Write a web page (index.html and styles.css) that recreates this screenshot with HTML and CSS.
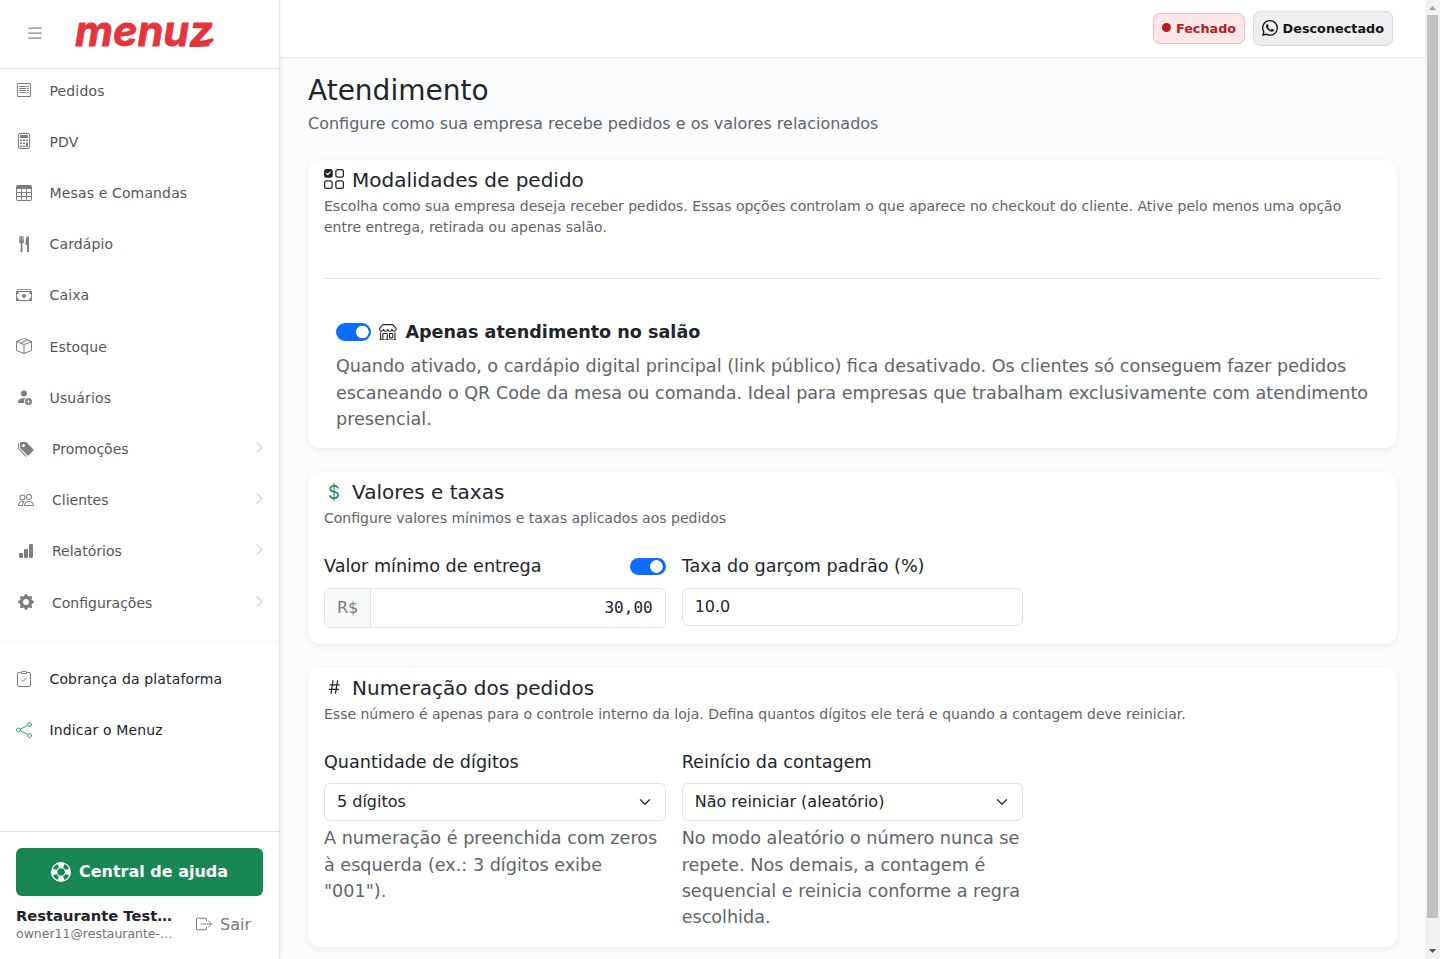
FILE: index.html
```html
<!DOCTYPE html>
<html lang="pt-BR">
<head>
    <meta charset="UTF-8">
    <meta name="viewport" content="width=device-width, initial-scale=1.0">
    <title>Menuz - Atendimento</title>
    <link rel="stylesheet" href="styles.css">
</head>
<body>

<!-- Menu lateral -->
<aside class="sidebar">
    <div class="sidebar-header">
        <button class="menu-toggle" aria-label="Menu">
            <svg class="icon icon-lg" viewBox="0 0 16 16"><path class="line" d="M3 4h10M3 8h10M3 12h10"/></svg>
        </button>
        <svg class="logo" viewBox="0 0 150 60" aria-label="menuz">
            <text x="5" y="42" textLength="138" lengthAdjust="spacingAndGlyphs">menuz</text>
            <path d="M120 41.5Q131 37 142.500 34.500Q145 37 139 39.500Q129 44 120 42.500z"/>
        </svg>
    </div>

    <nav class="sidebar-nav">
        <a class="nav-item" href="#">
            <svg class="icon" viewBox="0 0 16 16"><path class="line" d="M1.5 2l.5-1 1 1 1-1 1 1 1-1 1 1 1-1 1 1 1-1 1 1 1-1 1 1 1-1 .5 1v12l-.5 1-1-1-1 1-1-1-1 1-1-1-1 1-1-1-1 1-1-1-1 1-1-1-1 1-.5-1z"/><path class="line" d="M3.5 4.5h6m-6 2h6m-6 2h6m-6 2h6m2-6h1m-1 2h1m-1 2h1m-1 2h1"/></svg>
            <span>Pedidos</span>
        </a>
        <a class="nav-item" href="#">
            <svg class="icon" viewBox="0 0 16 16"><rect class="line" x="2.5" y=".5" width="11" height="15" rx="1.5"/><path d="M4 2h8v3H4zM4 6.5h2v1.5H4zM7 6.5h2v1.5H7zM10 6.5h2v1.5h-2zM4 9.5h2V11H4zM7 9.5h2V11H7zM4 12.5h2V14H4zM7 12.5h2V14H7zM10 9.5h2V14h-2z"/></svg>
            <span>PDV</span>
        </a>
        <a class="nav-item" href="#">
            <svg class="icon" viewBox="0 0 16 16"><path d="M0 2a2 2 0 0 1 2-2h12a2 2 0 0 1 2 2v12a2 2 0 0 1-2 2H2a2 2 0 0 1-2-2zm15 2h-4v3h4zm0 4h-4v3h4zm0 4h-4v3h3a1 1 0 0 0 1-1zm-5 3v-3H6v3zm-5 0v-3H1v2a1 1 0 0 0 1 1zm-4-4h4V8H1zm0-4h4V4H1zm5-3v3h4V4zm4 4H6v3h4z"/></svg>
            <span>Mesas e Comandas</span>
        </a>
        <a class="nav-item" href="#">
            <svg class="icon" viewBox="0 0 16 16"><path d="M13 .5c0-.276-.226-.506-.498-.465-1.703.257-2.94 2.012-3 8.462a.5.5 0 0 0 .498.5c.56.01 1 .13 1 1.003v5.5a.5.5 0 0 0 .5.5h1a.5.5 0 0 0 .5-.5zM4.25 0a.25.25 0 0 1 .25.25v5.122a.128.128 0 0 0 .256.006l.233-5.14A.25.25 0 0 1 5.24 0h.522a.25.25 0 0 1 .25.238l.233 5.14a.128.128 0 0 0 .256-.006V.25A.25.25 0 0 1 6.75 0h.29a.5.5 0 0 1 .498.458l.423 5.07a1.69 1.69 0 0 1-1.059 1.711l-.053.022a.92.92 0 0 0-.58.884L6.47 15a.971.971 0 1 1-1.942 0l.202-6.855a.92.92 0 0 0-.58-.884l-.053-.022a1.69 1.69 0 0 1-1.059-1.712L3.462.458A.5.5 0 0 1 3.96 0z"/></svg>
            <span>Cardápio</span>
        </a>
        <a class="nav-item" href="#">
            <svg class="icon" viewBox="0 0 16 16"><path d="M1 2.2h14v.9H1zM8 11a2 2 0 1 0 0-4 2 2 0 0 0 0 4"/><path d="M0 5a1 1 0 0 1 1-1h14a1 1 0 0 1 1 1v8a1 1 0 0 1-1 1H1a1 1 0 0 1-1-1zm3 0a2 2 0 0 1-2 2v4a2 2 0 0 1 2 2h10a2 2 0 0 1 2-2V7a2 2 0 0 1-2-2z"/></svg>
            <span>Caixa</span>
        </a>
        <a class="nav-item" href="#">
            <svg class="icon" viewBox="0 0 16 16"><path d="M8.186 1.113a.5.5 0 0 0-.372 0L1.846 3.5l2.404.961L10.404 2zm3.564 1.426L5.596 5 8 5.961 14.154 3.5zm3.25 1.7-6.5 2.6v7.922l6.5-2.6V4.24zM7.5 14.762V6.838L1 4.239v7.923zM7.443.184a1.5 1.5 0 0 1 1.114 0l7.129 2.852A.5.5 0 0 1 16 3.5v8.662a1 1 0 0 1-.629.928l-7.185 2.874a.5.5 0 0 1-.372 0L.63 13.09a1 1 0 0 1-.63-.928V3.5a.5.5 0 0 1 .314-.464z"/></svg>
            <span>Estoque</span>
        </a>
        <a class="nav-item" href="#">
            <svg class="icon" viewBox="0 0 16 16"><path d="M12.5 16a3.5 3.5 0 1 0 0-7 3.5 3.5 0 0 0 0 7m.5-5v1h1a.5.5 0 0 1 0 1h-1v1a.5.5 0 0 1-1 0v-1h-1a.5.5 0 0 1 0-1h1v-1a.5.5 0 0 1 1 0M11 4.5a3 3 0 1 1-6 0 3 3 0 0 1 6 0"/><path d="M2 13c0 1 1 1 1 1h5.256A4.5 4.5 0 0 1 8 12.5a4.5 4.5 0 0 1 1.544-3.393Q8.844 9.002 8 9c-5 0-6 3-6 4"/></svg>
            <span>Usuários</span>
        </a>
        <a class="nav-item nav-group" href="#">
            <svg class="icon" viewBox="0 0 16 16"><path d="M2 2a1 1 0 0 1 1-1h4.586a1 1 0 0 1 .707.293l7 7a1 1 0 0 1 0 1.414l-4.586 4.586a1 1 0 0 1-1.414 0l-7-7A1 1 0 0 1 2 6.586zm3.5 4a1.5 1.5 0 1 0 0-3 1.5 1.5 0 0 0 0 3"/><path d="M1.293 7.793A1 1 0 0 1 1 7.086V2a1 1 0 0 0-1 1v4.586a1 1 0 0 0 .293.707l7 7a1 1 0 0 0 1.414 0l.043-.043z"/></svg>
            <span>Promoções</span>
            <svg class="chevron" viewBox="0 0 16 16"><path class="line" d="M5 2l6 6-6 6"/></svg>
        </a>
        <a class="nav-item nav-group" href="#">
            <svg class="icon" viewBox="0 0 16 16"><path d="M15 14s1 0 1-1-1-4-5-4-5 3-5 4 1 1 1 1zm-7.978-1L7 12.996c.001-.264.167-1.03.76-1.72C8.312 10.629 9.282 10 11 10c1.717 0 2.687.63 3.24 1.276.593.69.758 1.457.76 1.72l-.008.002-.014.002zM11 7a2 2 0 1 0 0-4 2 2 0 0 0 0 4m3-2a3 3 0 1 1-6 0 3 3 0 0 1 6 0M6.936 9.28a6 6 0 0 0-1.23-.247A7 7 0 0 0 5 9c-4 0-5 3-5 4q0 1 1 1h4.216A2.24 2.24 0 0 1 5 13c0-1.01.377-2.042 1.09-2.904.243-.294.526-.569.846-.816M4.92 10A5.5 5.5 0 0 0 4 13H1c0-.26.164-1.03.76-1.724.545-.636 1.492-1.256 3.16-1.275ZM1.5 5.5a3 3 0 1 1 6 0 3 3 0 0 1-6 0m3-2a2 2 0 1 0 0 4 2 2 0 0 0 0-4"/></svg>
            <span>Clientes</span>
            <svg class="chevron" viewBox="0 0 16 16"><path class="line" d="M5 2l6 6-6 6"/></svg>
        </a>
        <a class="nav-item nav-group" href="#">
            <svg class="icon" viewBox="0 0 16 16"><rect x="1" y="10" width="4" height="5" rx="1"/><rect x="6" y="6" width="4" height="9" rx="1"/><rect x="11" y="1" width="4" height="14" rx="1"/></svg>
            <span>Relatórios</span>
            <svg class="chevron" viewBox="0 0 16 16"><path class="line" d="M5 2l6 6-6 6"/></svg>
        </a>
        <a class="nav-item nav-group" href="#">
            <svg class="icon" viewBox="0 0 16 16"><path d="M9.405 1.05c-.413-1.4-2.397-1.4-2.81 0l-.1.34a1.464 1.464 0 0 1-2.105.872l-.31-.17c-1.283-.698-2.686.705-1.987 1.987l.169.311c.446.82.023 1.841-.872 2.105l-.34.1c-1.4.413-1.4 2.397 0 2.81l.34.1a1.464 1.464 0 0 1 .872 2.105l-.17.31c-.698 1.283.705 2.686 1.987 1.987l.311-.169a1.464 1.464 0 0 1 2.105.872l.1.34c.413 1.4 2.397 1.4 2.81 0l.1-.34a1.464 1.464 0 0 1 2.105-.872l.31.17c1.283.698 2.686-.705 1.987-1.987l-.169-.311a1.464 1.464 0 0 1 .872-2.105l.34-.1c1.4-.413 1.4-2.397 0-2.81l-.34-.1a1.464 1.464 0 0 1-.872-2.105l.17-.31c.698-1.283-.705-2.686-1.987-1.987l-.311.169a1.464 1.464 0 0 1-2.105-.872zM8 10.93a2.929 2.929 0 1 1 0-5.86 2.929 2.929 0 0 1 0 5.858z"/></svg>
            <span>Configurações</span>
            <svg class="chevron" viewBox="0 0 16 16"><path class="line" d="M5 2l6 6-6 6"/></svg>
        </a>
        <div class="nav-divider"></div>
        <a class="nav-item nav-dark" href="#">
            <svg class="icon" viewBox="0 0 16 16"><path class="line" d="M5 1.5H3A1.5 1.5 0 0 0 1.5 3v11A1.5 1.5 0 0 0 3 15.5h10a1.5 1.5 0 0 0 1.5-1.5V3A1.5 1.5 0 0 0 13 1.5h-2M5.5 1q0-.5.5-.5h4q.5 0 .5.5v1.5h-5zM5.5 9L7 10.5l3.5-3.5"/></svg>
            <span>Cobrança da plataforma</span>
        </a>
        <a class="nav-item nav-dark nav-share" href="#">
            <svg class="icon" viewBox="0 0 16 16"><path class="line" d="M4.3 7.2l7.4-3.7M4.3 8.8l7.4 3.7"/><circle class="line" cx="2.5" cy="8" r="2"/><circle class="line" cx="13.5" cy="2.5" r="2"/><circle class="line" cx="13.5" cy="13.5" r="2"/></svg>
            <span>Indicar o Menuz</span>
        </a>
    </nav>

    <div class="sidebar-footer">
        <a class="help-button" href="#">
            <svg class="icon icon-lg" viewBox="0 0 16 16"><path d="M8 16A8 8 0 1 0 8 0a8 8 0 0 0 0 16m6.43-5.228a7.03 7.03 0 0 1-3.658 3.658l-1.115-2.788a4 4 0 0 0 1.985-1.985zM5.228 14.43a7.03 7.03 0 0 1-3.658-3.658l2.788-1.115a4 4 0 0 0 1.985 1.985zm9.202-9.202-2.788 1.115a4 4 0 0 0-1.985-1.985l1.115-2.788a7.03 7.03 0 0 1 3.658 3.658m-8.087-.87a4 4 0 0 0-1.985 1.985L1.57 5.228A7.03 7.03 0 0 1 5.228 1.57zM8 11a3 3 0 1 1 0-6 3 3 0 0 1 0 6"/></svg>
            Central de ajuda
        </a>
        <div class="account">
            <div class="account-info">
                <div class="account-name">Restaurante Test…</div>
                <div class="account-email">owner11@restaurante-…</div>
            </div>
            <a class="logout" href="#">
                <svg class="icon" viewBox="0 0 16 16"><path class="line" d="M10.5 5V3a.8.8 0 0 0-.8-.8H1.3A.8.8 0 0 0 .5 3v10a.8.8 0 0 0 .8.8h8.4a.8.8 0 0 0 .8-.8v-2M5.5 8h10M12.5 5l3 3-3 3"/></svg>
                Sair
            </a>
        </div>
    </div>
</aside>

<!-- Conteúdo -->
<div class="page">
    <header class="topbar">
        <span class="status status-closed"><i class="dot"></i>Fechado</span>
        <span class="status status-offline">
            <svg class="icon" viewBox="0 0 16 16"><path d="M13.601 2.326A7.85 7.85 0 0 0 7.994 0C3.627 0 .068 3.558.064 7.926c0 1.399.366 2.76 1.057 3.965L0 16l4.204-1.102a7.9 7.9 0 0 0 3.79.965h.004c4.368 0 7.926-3.558 7.93-7.93A7.9 7.9 0 0 0 13.6 2.326zM7.994 14.521a6.6 6.6 0 0 1-3.356-.92l-.24-.144-2.494.654.666-2.433-.156-.251a6.56 6.56 0 0 1-1.007-3.505c0-3.626 2.957-6.584 6.591-6.584a6.56 6.56 0 0 1 4.66 1.931 6.56 6.56 0 0 1 1.928 4.66c-.004 3.639-2.961 6.592-6.592 6.592m3.615-4.934c-.197-.099-1.17-.578-1.353-.646-.182-.065-.315-.099-.445.099-.133.197-.513.646-.627.775-.114.133-.232.148-.43.05-.197-.1-.836-.308-1.592-.985-.59-.525-.985-1.175-1.103-1.372-.114-.198-.011-.304.088-.403.087-.088.197-.232.296-.346.1-.114.133-.198.198-.33.065-.134.034-.248-.015-.347-.05-.099-.445-1.076-.612-1.47-.16-.389-.323-.335-.445-.34-.114-.007-.247-.007-.38-.007a.73.73 0 0 0-.529.247c-.182.198-.691.677-.691 1.654s.71 1.916.81 2.049c.098.133 1.394 2.132 3.383 2.992.47.205.84.326 1.129.418.475.152.904.129 1.246.08.38-.058 1.171-.48 1.338-.943.164-.464.164-.86.114-.943-.049-.084-.182-.133-.38-.232"/></svg>
            Desconectado
        </span>
    </header>

    <main class="content">
        <h1>Atendimento</h1>
        <p class="lead">Configure como sua empresa recebe pedidos e os valores relacionados</p>

        <section class="card">
            <h2>
                <svg class="icon icon-lg" viewBox="0 0 16 16"><rect class="line" x="9.5" y=".5" width="6" height="6" rx="1.5"/><rect class="line" x=".5" y="9.5" width="6" height="6" rx="1.5"/><rect class="line" x="9.5" y="9.5" width="6" height="6" rx="1.5"/><path d="M0 2a2 2 0 0 1 2-2h3a2 2 0 0 1 2 2v3a2 2 0 0 1-2 2H2a2 2 0 0 1-2-2zm5.354.854a.5.5 0 1 0-.708-.708L3 3.793l-.646-.647a.5.5 0 1 0-.708.708l1 1a.5.5 0 0 0 .708 0z"/></svg>
                Modalidades de pedido
            </h2>
            <p class="card-subtitle">Escolha como sua empresa deseja receber pedidos. Essas opções controlam o que aparece no checkout do cliente. Ative pelo menos uma opção entre entrega, retirada ou apenas salão.</p>
            <hr>
            <div class="option">
                <div class="option-title">
                    <span class="switch"></span>
                    <svg class="icon" viewBox="0 0 16 16"><path d="M2.97 1.35A1 1 0 0 1 3.73 1h8.54a1 1 0 0 1 .76.35l2.609 3.044A1.5 1.5 0 0 1 16 5.37v.255a2.375 2.375 0 0 1-4.25 1.458A2.37 2.37 0 0 1 9.875 8 2.37 2.37 0 0 1 8 7.083 2.37 2.37 0 0 1 6.125 8a2.37 2.37 0 0 1-1.875-.917A2.375 2.375 0 0 1 0 5.625V5.37a1.5 1.5 0 0 1 .361-.976zm1.78 4.275a1.375 1.375 0 0 0 2.75 0 .5.5 0 0 1 1 0 1.375 1.375 0 0 0 2.75 0 .5.5 0 0 1 1 0 1.375 1.375 0 1 0 2.75 0V5.37a.5.5 0 0 0-.12-.325L12.27 2H3.73L1.12 5.045A.5.5 0 0 0 1 5.37v.255a1.375 1.375 0 0 0 2.75 0 .5.5 0 0 1 1 0M1.5 8.5A.5.5 0 0 1 2 9v6h1v-5a1 1 0 0 1 1-1h3a1 1 0 0 1 1 1v5h6V9a.5.5 0 0 1 1 0v6h.5a.5.5 0 0 1 0 1H.5a.5.5 0 0 1 0-1H1V9a.5.5 0 0 1 .5-.5M4 15h3v-5H4zm5-5a1 1 0 0 1 1-1h2a1 1 0 0 1 1 1v3a1 1 0 0 1-1 1h-2a1 1 0 0 1-1-1zm3 0h-2v3h2z"/></svg>
                    <strong>Apenas atendimento no salão</strong>
                </div>
                <p class="help-text">Quando ativado, o cardápio digital principal (link público) fica desativado. Os clientes só conseguem fazer pedidos escaneando o QR Code da mesa ou comanda. Ideal para empresas que trabalham exclusivamente com atendimento presencial.</p>
            </div>
        </section>

        <section class="card">
            <h2><span class="symbol">$</span>Valores e taxas</h2>
            <p class="card-subtitle">Configure valores mínimos e taxas aplicados aos pedidos</p>
            <div class="row">
                <div class="field">
                    <div class="field-label">Valor mínimo de entrega <span class="switch"></span></div>
                    <div class="input-group">
                        <span class="prefix">R$</span>
                        <input class="money" type="text" value="30,00">
                    </div>
                </div>
                <div class="field">
                    <div class="field-label">Taxa do garçom padrão (%)</div>
                    <input class="control" type="text" value="10.0">
                </div>
            </div>
        </section>

        <section class="card">
            <h2>
                <svg class="icon icon-lg" viewBox="0 0 16 16"><path class="line" d="M7.2 3L5.6 13M10.8 3L9.2 13M4.8 6.2h7.4M4.2 9.8h7.4"/></svg>
                Numeração dos pedidos
            </h2>
            <p class="card-subtitle">Esse número é apenas para o controle interno da loja. Defina quantos dígitos ele terá e quando a contagem deve reiniciar.</p>
            <div class="row">
                <div class="field">
                    <div class="field-label">Quantidade de dígitos</div>
                    <div class="control select">5 dígitos
                        <svg viewBox="0 0 16 16"><path d="m2 5 6 6 6-6"/></svg>
                    </div>
                    <p class="help-text">A numeração é preenchida com zeros à esquerda (ex.: 3 dígitos exibe "001").</p>
                </div>
                <div class="field">
                    <div class="field-label">Reinício da contagem</div>
                    <div class="control select">Não reiniciar (aleatório)
                        <svg viewBox="0 0 16 16"><path d="m2 5 6 6 6-6"/></svg>
                    </div>
                    <p class="help-text">No modo aleatório o número nunca se repete. Nos demais, a contagem é sequencial e reinicia conforme a regra escolhida.</p>
                </div>
            </div>
        </section>
    </main>
</div>

<!-- Barra de rolagem -->
<div class="scrollbar">
    <svg viewBox="0 0 15 15"><path fill="#a3a3a3" d="M4 10h7L7.5 6z"/></svg>
    <div class="scroll-thumb"></div>
    <svg viewBox="0 0 15 15"><path fill="#505050" d="M4 5h7l-3.5 4z"/></svg>
</div>

</body>
</html>
```
FILE: styles.css
```css
:root {
    --text: #212529;
    --muted: #606468;
    --border: #dee2e6;
    --blue: #0d6efd;
    --green: #198754;
}

* {
    box-sizing: border-box;
}

body {
    margin: 0;
    height: 100vh;
    display: flex;
    overflow: hidden;
    font-family: "DejaVu Sans", sans-serif;
    font-size: 16px;
    line-height: 1.5;
    color: var(--text);
    background-color: #fbfcfe;
}

h1, h2, p {
    margin: 0;
    font-weight: normal;
}

a {
    color: inherit;
    text-decoration: none;
}

.icon {
    width: 16px;
    height: 16px;
    flex: none;
    fill: currentColor;
}

.icon-lg {
    width: 20px;
    height: 20px;
}

.line {
    fill: none;
    stroke: currentColor;
    stroke-width: 1;
    stroke-linecap: round;
    stroke-linejoin: round;
}

/* Menu lateral */
.sidebar {
    width: 280px;
    flex: none;
    display: flex;
    flex-direction: column;
    background-color: #fff;
    border-right: 1px solid var(--border);
    box-shadow: 1px 0 4px rgba(0, 0, 0, 0.06);
    z-index: 1;
}

.sidebar-header {
    height: 69px;
    flex: none;
    display: flex;
    align-items: center;
    padding-left: 25px;
    border-bottom: 1px solid var(--border);
}

.menu-toggle {
    display: flex;
    padding: 0;
    margin-top: -2px;
    border: none;
    background: none;
    color: #85858f;
}

.logo {
    width: 150px;
    height: 60px;
    margin-left: 25px;
    fill: #e5343b;
    stroke: #e5343b;
    stroke-width: 0.8;
    stroke-linejoin: round;
}

.logo text {
    font-family: Inter, sans-serif;
    font-size: 42px;
    font-weight: 700;
    font-style: italic;
}

.sidebar-nav {
    flex: 1;
    margin-top: -3.4px;
}

.nav-item {
    height: 51.2px;
    display: flex;
    align-items: center;
    padding: 0 16px 0 15.5px;
    gap: 18px;
    font-size: 14px;
    letter-spacing: 0.14px;
    color: #555659;
}

.nav-item .icon {
    margin-top: -2px;
    color: #7d7e80;
}

.nav-group {
    padding-left: 18px;
    letter-spacing: 0;
}

.chevron {
    width: 13px;
    height: 13px;
    margin: -4px -3px 0 auto;
    color: #a2a3a6;
}

.nav-divider {
    height: 1px;
    margin: 12px 0 12.4px;
    background-color: #f5f6f7;
}

.nav-dark {
    color: var(--text);
}

.nav-share .icon {
    color: #45a077;
}

.sidebar-footer {
    height: 128px;
    padding: 16px 16px 0;
    border-top: 1px solid var(--border);
}

.help-button {
    height: 48px;
    display: flex;
    align-items: center;
    justify-content: center;
    gap: 8px;
    border-radius: 6px;
    background-color: var(--green);
    color: #fff;
    font-weight: bold;
}

.account {
    display: flex;
    align-items: center;
    padding-top: 9px;
}

.account-info {
    width: 180.5px;
    white-space: nowrap;
}

.account-name {
    font-size: 14.72px;
    line-height: 22px;
    font-weight: bold;
}

.account-email {
    margin-top: -1px;
    font-size: 12.48px;
    line-height: 15px;
    color: #707276;
}

.logout {
    display: flex;
    align-items: center;
    gap: 8px;
    padding-top: 3px;
    color: #77797c;
}

.logout .icon {
    margin: -2px 0 0 -0.5px;
}

/* Barra superior */
.page {
    flex: 1;
    min-width: 0;
}

.topbar {
    height: 58px;
    display: flex;
    align-items: center;
    justify-content: flex-end;
    gap: 8px;
    padding: 0 32px 1px 0;
    background-color: #fff;
    border-bottom: 1px solid #e2e9ec;
}

.status {
    height: 31px;
    display: flex;
    align-items: center;
    padding: 1px 8px 0;
    border: 1px solid #f3bcc0;
    border-radius: 7px;
    background-color: #fde7e8;
    color: #b41d22;
    font-size: 12.8px;
    font-weight: bold;
}

.status-offline {
    height: 35px;
    gap: 4.5px;
    border-color: #d8d9da;
    background-color: #efefef;
    color: #151515;
}

.status-offline .icon {
    margin-top: -2px;
}

.dot {
    width: 9px;
    height: 9px;
    margin: -2px 4.5px 0 0;
    border-radius: 50%;
    background-color: #b41d22;
}

/* Conteúdo */
.content {
    padding: 16px 28px 0;
}

h1 {
    font-size: 28px;
    line-height: 34px;
}

.lead {
    margin: 4px 0 24px;
    color: var(--muted);
}

.card {
    padding: 8px 16px 16px;
    margin-bottom: 24px;
    border-radius: 12px;
    background-color: #fff;
    box-shadow: 0 2px 6px rgba(0, 0, 0, 0.07);
}

h2 {
    display: flex;
    align-items: center;
    gap: 8px;
    font-size: 20px;
    line-height: 24px;
}

h2 .icon {
    margin-top: -2px;
}

.symbol {
    width: 20px;
    padding-top: 1px;
    text-align: center;
    font-family: Inter, sans-serif;
    font-size: 18.5px;
    line-height: 23px;
    color: var(--green);
}

.card-subtitle {
    margin: 4px 0 24px;
    font-size: 14px;
    line-height: 21px;
    color: var(--muted);
}

hr {
    margin: 40px 0;
    border: none;
    border-top: 1px solid var(--border);
}

.option {
    padding: 0 12px;
}

.option-title {
    display: flex;
    align-items: center;
    gap: 8.3px;
    margin-bottom: 7.8px;
    font-size: 17.6px;
}

.option-title .icon {
    width: 17.6px;
    height: 17.6px;
    margin-top: -1px;
}

.switch {
    width: 35.2px;
    height: 17.6px;
    flex: none;
    border-radius: 9px;
    background: radial-gradient(circle at 26.4px 50%, #fff 6px, var(--blue) 6.6px);
}

.help-text {
    font-size: 17.6px;
    line-height: 26.4px;
    color: var(--muted);
}

.row {
    display: grid;
    grid-template-columns: repeat(3, 1fr);
    gap: 16px;
}

.field-label {
    display: flex;
    align-items: center;
    justify-content: space-between;
    margin-bottom: 8px;
    font-size: 17.6px;
    line-height: 26.4px;
}

.control {
    width: 100%;
    height: 38px;
    display: block;
    padding: 0 12px 1px;
    border: 1px solid var(--border);
    border-radius: 6px;
    background-color: #fff;
    color: var(--text);
    font-family: inherit;
    font-size: 16px;
    line-height: 36px;
}

.select {
    display: flex;
    align-items: center;
    justify-content: space-between;
}

.select svg {
    width: 16px;
    height: 12px;
    fill: none;
    stroke: #343a40;
    stroke-width: 2;
    stroke-linecap: round;
    stroke-linejoin: round;
}

.control + .help-text {
    margin-top: 4px;
}

.input-group {
    height: 40px;
    display: flex;
    border: 1px solid var(--border);
    border-radius: 6px;
    overflow: hidden;
}

.prefix {
    padding: 0 12px;
    line-height: 38px;
    border-right: 1px solid var(--border);
    background-color: #f8f9fb;
    color: #777b80;
}

.money {
    flex: 1;
    min-width: 0;
    padding: 0 12px;
    border: none;
    color: var(--text);
    font-family: "DejaVu Sans Mono", monospace;
    font-size: 16px;
    text-align: right;
}

/* Barra de rolagem */
.scrollbar {
    width: 15px;
    flex: none;
    display: flex;
    flex-direction: column;
    background-color: #f1f1f1;
}

.scrollbar svg {
    width: 15px;
    height: 15px;
}

.scroll-thumb {
    width: 11px;
    height: 903px;
    margin: 0 2px auto;
    background-color: #c1c1c1;
}
```
